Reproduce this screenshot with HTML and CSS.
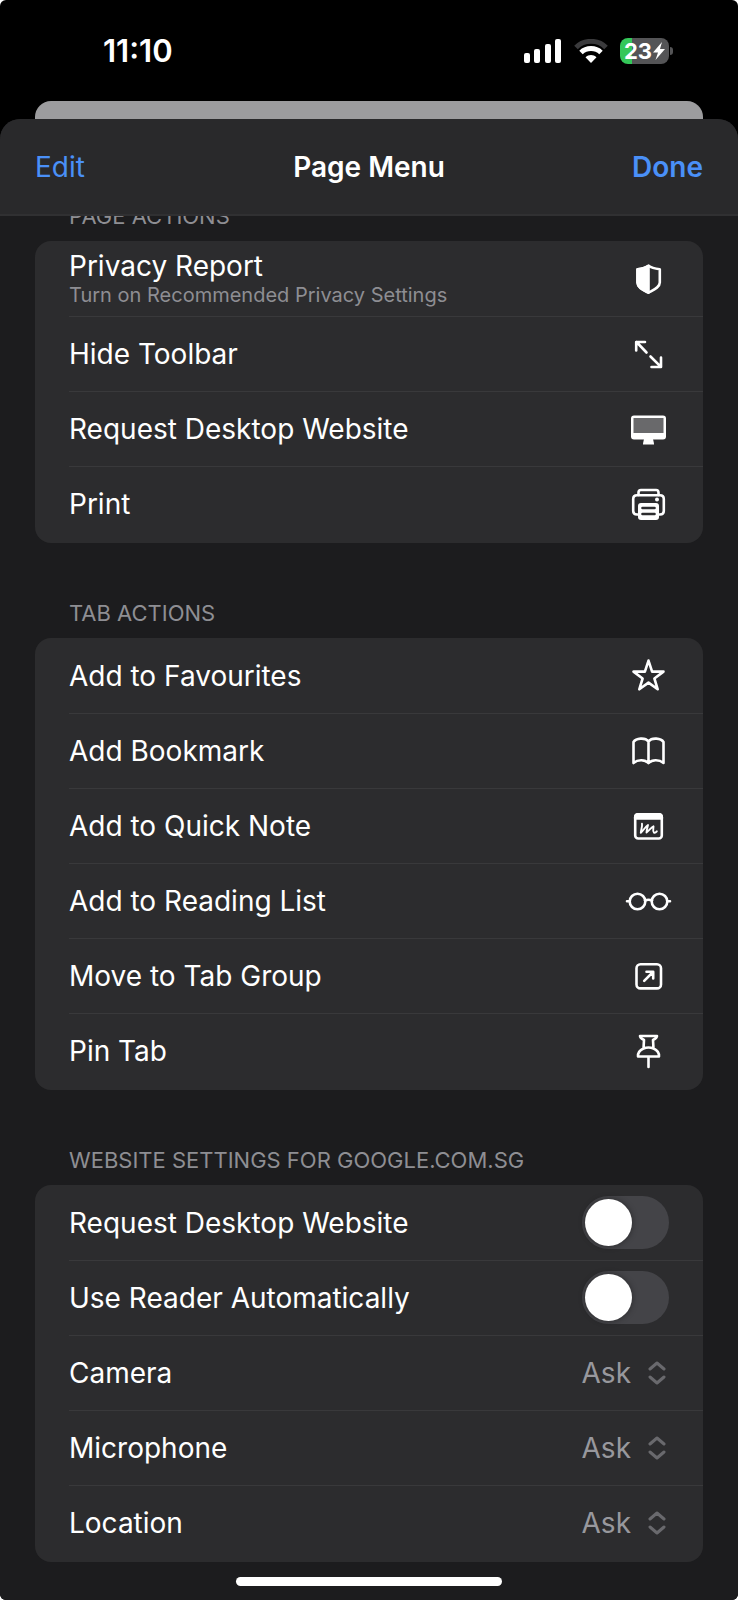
FILE: index.html
```html
<!DOCTYPE html>
<html lang="en">

<head>
  <meta charset="UTF-8">
  <meta name="viewport" content="width=device-width, initial-scale=1.0">
  <title>Page Menu</title>
  <link rel="stylesheet" href="styles.css">
</head>

<body>
  <div class="screen">
    <div class="status-bar">
      <span class="time">11:10</span>
      <div class="status-icons">
        <svg class="signal" width="38" height="24" viewBox="0 0 38 24" fill="#fff">
          <rect x="0" y="14" width="6" height="10" rx="2" />
          <rect x="10" y="10" width="6" height="14" rx="2" />
          <rect x="21" y="5" width="6" height="19" rx="2" />
          <rect x="31" y="0" width="6" height="24" rx="2" />
        </svg>
        <svg class="wifi" width="34" height="24" viewBox="0 0 34 24" fill="none">
          <path d="M2 8.500C10 0.300 24 0.300 32 8.500" stroke="#3a3a3c" stroke-width="5" />
          <path d="M7 13.500C12.500 8.300 21.500 8.300 27 13.500" stroke="#fff" stroke-width="5" />
          <path d="M11.500 18.200C14.600 15.400 19.400 15.400 22.500 18.200L17 24Z" fill="#fff" />
        </svg>
        <div class="battery">
          <span>23</span>
          <svg width="14" height="18" viewBox="0 0 14 18" fill="#fff">
            <path d="M10 0L1 10.500H6L3.500 18L13 7H8Z" />
          </svg>
        </div>
      </div>
    </div>

    <div class="back-card"></div>

    <div class="sheet">
      <header class="sheet-header">
        <button type="button" class="nav-button">Edit</button>
        <h1>Page Menu</h1>
        <button type="button" class="nav-button done">Done</button>
      </header>

      <main class="content">
        <section>
          <h2>PAGE ACTIONS</h2>
          <ul class="group">
            <li>
              <button type="button" class="row">
                <span class="label">Privacy Report<small>Turn on Recommended Privacy Settings</small></span>
                <svg class="icon" viewBox="0 0 42 42">
                  <path d="M21.500 7.800C18 10.300 14 10.800 10.500 11.300V24.500C10.500 29.500 16.500 32 21.500 34.700C26.500 32 32.800 29.500 32.800 24.500V11.300C29 10.800 25 10.300 21.500 7.800Z" />
                  <path class="solid" d="M21.500 7.800C18 10.300 14 10.800 10.500 11.300V24.500C10.500 29.500 16.500 32 21.500 34.700Z" />
                </svg>
              </button>
            </li>
            <li>
              <button type="button" class="row">
                <span class="label">Hide Toolbar</span>
                <svg class="icon" viewBox="0 0 42 42">
                  <path d="M19.500 19.500L9.500 9M9.200 17.500V9H18M23.500 23.500L33.700 33.700M34 24.500V34H24.500" />
                </svg>
              </button>
            </li>
            <li>
              <button type="button" class="row">
                <span class="label">Request Desktop Website</span>
                <svg class="icon" viewBox="0 0 42 42">
                  <rect x="4" y="7.500" width="35" height="24" rx="3" fill="#fff" stroke="none" />
                  <rect x="6.500" y="10" width="30" height="15" fill="#69696b" stroke="none" />
                  <path d="M17 31H26L27 35.500V36.500H16V35.500Z" fill="#fff" stroke="none" />
                </svg>
              </button>
            </li>
            <li>
              <button type="button" class="row">
                <span class="label">Print</span>
                <svg class="icon" viewBox="0 0 42 42">
                  <path d="M11.500 12V9.500Q11.500 7 14 7H29Q31.500 7 31.500 9.500V12" />
                  <path d="M11.500 31.500H10Q6.200 31.500 6.200 28V16Q6.200 12.200 10 12.200H33Q36.800 12.200 36.800 16V28Q36.800 31.500 33 31.500H31.500" />
                  <rect x="11" y="20" width="21" height="17" rx="3" fill="#fff" stroke="none" />
                  <path d="M15.500 25H27.500M15.500 31H27.500" stroke="#2c2c2e" />
                  <circle cx="30" cy="16.500" r="2" fill="#fff" stroke="none" />
                </svg>
              </button>
            </li>
          </ul>
        </section>

        <section>
          <h2>TAB ACTIONS</h2>
          <ul class="group">
            <li>
              <button type="button" class="row">
                <span class="label">Add to Favourites</span>
                <svg class="icon" viewBox="0 0 42 42">
                  <path d="M21.500 5.600L25.100 16.600H36.500L27.400 23.500L30.700 34.300L21.500 27.600L12.300 34.300L15.600 23.500L6.500 16.600H17.900Z" />
                </svg>
              </button>
            </li>
            <li>
              <button type="button" class="row">
                <span class="label">Add Bookmark</span>
                <svg class="icon" viewBox="0 0 42 42">
                  <path d="M6.500 33V12C9 8.200 18 7 21.500 11.500C25 7 34 8.200 36.500 12V33C32 29.300 25 29.500 21.500 33.200C18 29.500 11 29.300 6.500 33ZM21.500 11.500V33" />
                </svg>
              </button>
            </li>
            <li>
              <button type="button" class="row">
                <span class="label">Add to Quick Note</span>
                <svg class="icon" viewBox="0 0 42 42">
                  <rect x="8.200" y="9.200" width="26.600" height="24.300" rx="3" />
                  <path class="solid" d="M8.200 13.500V12Q8.200 9.200 11 9.200H32Q34.800 9.200 34.800 12V13.500Z" />
                  <path stroke-width="1.900" d="M15 18.800C15.500 21.500 14 25 13.800 27.800C16.500 25.500 18.500 21.500 21 20C20.500 22.500 19.500 25 19.500 27.600C22 25.800 24 22.500 26.500 21.300C26.500 23.500 25.500 26 26.800 27.400C28 28.300 29 27.300 29.800 26.300" />
                </svg>
              </button>
            </li>
            <li>
              <button type="button" class="row">
                <span class="label">Add to Reading List</span>
                <svg class="icon" viewBox="0 0 42 42">
                  <circle cx="10.500" cy="21.500" r="7.800" />
                  <circle cx="32.500" cy="21.500" r="7.800" />
                  <path d="M18 20.500Q21.500 19 25 20.500M0 21.200H2.500M40.500 21.200H43" />
                </svg>
              </button>
            </li>
            <li>
              <button type="button" class="row">
                <span class="label">Move to Tab Group</span>
                <svg class="icon" viewBox="0 0 42 42">
                  <rect x="9.500" y="9.200" width="24.500" height="24.200" rx="4" />
                  <path d="M17.200 25.800L26 17M19.500 16.800H26.200V23.500" />
                </svg>
              </button>
            </li>
            <li>
              <button type="button" class="row">
                <span class="label">Pin Tab</span>
                <svg class="icon" viewBox="0 0 42 42">
                  <path d="M13 6H30C30 8 28 9 26 10L26.500 18.500C30 20 32.200 23 32 26.500H11C10.800 23 13 20 16.500 18.500L17 10C15 9 13 8 13 6ZM16.500 18.500Q21.500 16.500 26.500 18.500M21.500 26.500V37" />
                </svg>
              </button>
            </li>
          </ul>
        </section>

        <section>
          <h2>WEBSITE SETTINGS FOR GOOGLE.COM.SG</h2>
          <ul class="group">
            <li class="row">
              <label class="label" for="desktopSite">Request Desktop Website</label>
              <input type="checkbox" class="toggle" id="desktopSite">
            </li>
            <li class="row">
              <label class="label" for="autoReader">Use Reader Automatically</label>
              <input type="checkbox" class="toggle" id="autoReader">
            </li>
            <li class="row">
              <label class="label" for="camera">Camera</label>
              <div class="picker">
                <select id="camera">
                  <option>Ask</option>
                  <option>Deny</option>
                  <option>Allow</option>
                </select>
                <svg class="chevrons" width="18" height="26" viewBox="0 0 18 26">
                  <path d="M2 9L9 3L16 9M2 17L9 23L16 17" />
                </svg>
              </div>
            </li>
            <li class="row">
              <label class="label" for="microphone">Microphone</label>
              <div class="picker">
                <select id="microphone">
                  <option>Ask</option>
                  <option>Deny</option>
                  <option>Allow</option>
                </select>
                <svg class="chevrons" width="18" height="26" viewBox="0 0 18 26">
                  <path d="M2 9L9 3L16 9M2 17L9 23L16 17" />
                </svg>
              </div>
            </li>
            <li class="row">
              <label class="label" for="location">Location</label>
              <div class="picker">
                <select id="location">
                  <option>Ask</option>
                  <option>Deny</option>
                  <option>Allow</option>
                </select>
                <svg class="chevrons" width="18" height="26" viewBox="0 0 18 26">
                  <path d="M2 9L9 3L16 9M2 17L9 23L16 17" />
                </svg>
              </div>
            </li>
          </ul>
        </section>
      </main>

      <div class="home-indicator"></div>
    </div>
  </div>
</body>

</html>
```
FILE: styles.css
```css
* {
  box-sizing: border-box;
}

body {
  margin: 0;
  background-color: #fff;
  color: #fff;
  font-family: Inter, "Liberation Sans", sans-serif;
  font-size: 28px;
  line-height: 34px;
}

button,
select {
  font: inherit;
  color: inherit;
  background: none;
  border: none;
  padding: 0;
  cursor: pointer;
}

.screen {
  display: flex;
  flex-direction: column;
  min-height: 100vh;
  background-color: #000;
  border-radius: 6px;
  overflow: hidden;
}

/* status bar */
.status-bar {
  display: flex;
  justify-content: space-between;
  align-items: center;
  height: 101px;
  padding: 0 69px 0 103px;
}

.time {
  font-size: 31px;
  font-weight: 600;
}

.status-icons {
  display: flex;
  align-items: center;
  gap: 12px;
}

.battery {
  position: relative;
  display: flex;
  align-items: center;
  width: 49px;
  height: 26px;
  padding-left: 4px;
  border-radius: 8px;
  background: linear-gradient(to right, #34c759 12px, #545456 12px);
  font-size: 22px;
  font-weight: 700;
}

.battery::after {
  content: "";
  position: absolute;
  right: -4px;
  top: 9px;
  width: 3px;
  height: 8px;
  border-radius: 0 3px 3px 0;
  background-color: #545456;
}

/* sheet */
.back-card {
  height: 18px;
  margin: 0 35px;
  border-radius: 16px 16px 0 0;
  background-color: #9c9c9e;
}

.sheet {
  flex: 1;
  border-radius: 20px 20px 0 0;
  background-color: #1c1c1e;
}

.sheet-header {
  position: relative;
  z-index: 1;
  display: grid;
  grid-template-columns: 1fr auto 1fr;
  align-items: center;
  height: 97px;
  padding: 0 35px;
  border-bottom: 2px solid #303032;
  border-radius: 20px 20px 0 0;
  background-color: #29292b;
}

.sheet-header h1 {
  margin: 0;
  font-size: 28px;
  font-weight: 600;
}

.nav-button {
  justify-self: start;
  color: #4a90f8;
}

.done {
  justify-self: end;
  font-weight: 600;
}

/* the list starts scrolled a little way under the header */
.content {
  margin-top: -70px;
  padding: 0 35px;
}

h2 {
  margin: 0;
  padding: 55px 34px 10px;
  color: #8e8e93;
  font-size: 22px;
  font-weight: 400;
  line-height: 30px;
}

.group {
  margin: 0;
  padding: 0 0 2px;
  list-style: none;
  border-radius: 16px;
  background-color: #2c2c2e;
}

.row {
  display: flex;
  justify-content: space-between;
  align-items: center;
  width: 100%;
  height: 75px;
  padding: 0 34px;
  text-align: left;
}

.group li + li {
  background: linear-gradient(#39393b, #39393b) 34px 0 / 100% 1px no-repeat;
}

.label small {
  display: block;
  color: #8e8e93;
  font-size: 20px;
  line-height: 25px;
}

.icon {
  flex: none;
  width: 42px;
  height: 42px;
  overflow: visible;
  fill: none;
  stroke: #fff;
  stroke-width: 2.6;
  stroke-linecap: round;
  stroke-linejoin: round;
}

.icon .solid {
  fill: #fff;
}

.toggle {
  appearance: none;
  display: flex;
  align-items: center;
  width: 87px;
  height: 53px;
  margin: 0;
  padding: 3px;
  border-radius: 27px;
  background-color: #444448;
  cursor: pointer;
}

.toggle::before {
  content: "";
  width: 47px;
  height: 47px;
  border-radius: 50%;
  background-color: #fff;
  box-shadow: 0 0 6px rgba(0, 0, 0, 0.4);
}

.toggle:checked {
  justify-content: flex-end;
  background-color: #34c759;
}

.picker {
  position: relative;
  display: flex;
  align-items: center;
}

.picker select {
  appearance: none;
  padding-right: 38px;
  color: #98989d;
  text-align-last: right;
}

.chevrons {
  position: absolute;
  right: 3px;
  fill: none;
  stroke: #69696d;
  stroke-width: 3;
  stroke-linecap: round;
  stroke-linejoin: round;
  pointer-events: none;
}

.home-indicator {
  width: 36%;
  height: 9px;
  margin: 15px auto 14px;
  border-radius: 5px;
  background-color: #fff;
}
```
